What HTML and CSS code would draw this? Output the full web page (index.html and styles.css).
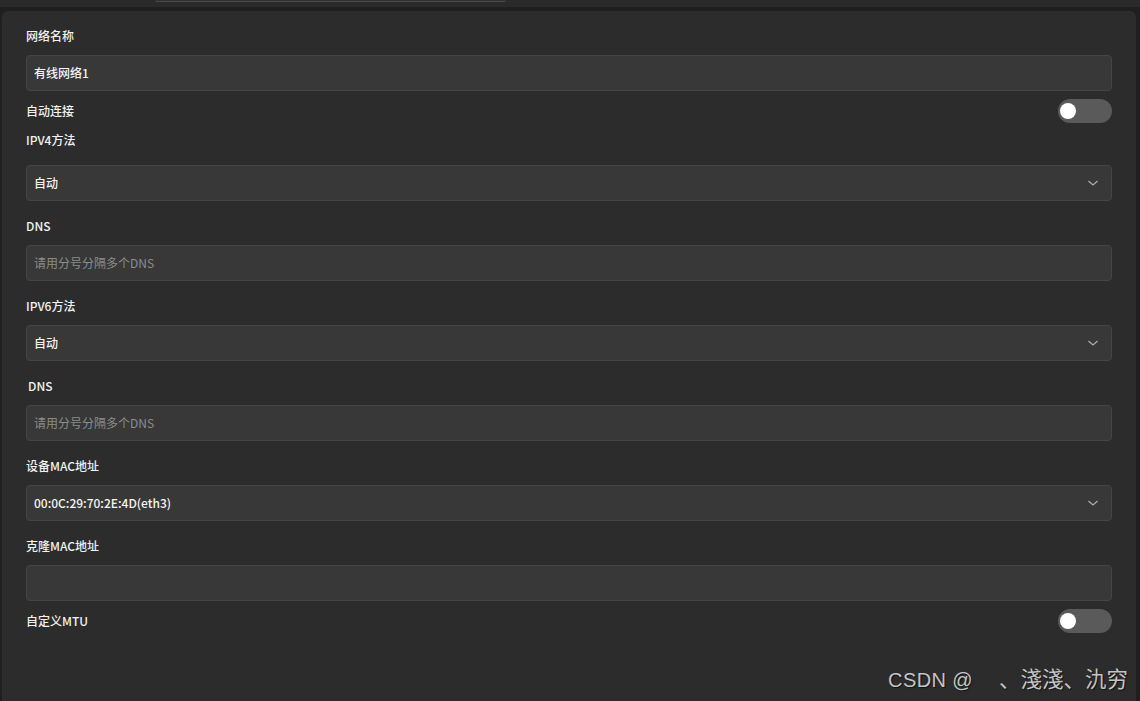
FILE: index.html
```html
<!DOCTYPE html>
<html lang="zh-CN">
<head>
<meta charset="utf-8">
<title>网络设置</title>
<link rel="stylesheet" href="styles.css">
</head>
<body>
<div class="topbar"><div class="tab"></div></div>
<div class="panel">
  <div class="label">网络名称</div>
  <div class="field"><span class="value">有线网络1</span></div>

  <div class="row"><span class="label-inline">自动连接</span><span class="switch"><span class="knob"></span></span></div>

  <div class="label label-ipv4">IPV4方法</div>
  <div class="field select"><span class="value">自动</span>
    <svg class="chev" width="12" height="8" viewBox="0 0 12 8"><polyline points="1.5,2 6,6 10.5,2" fill="none" stroke="#b0b0b0" stroke-width="1.2"/></svg>
  </div>

  <div class="label">DNS</div>
  <div class="field"><span class="placeholder">请用分号分隔多个DNS</span></div>

  <div class="label">IPV6方法</div>
  <div class="field select"><span class="value">自动</span>
    <svg class="chev" width="12" height="8" viewBox="0 0 12 8"><polyline points="1.5,2 6,6 10.5,2" fill="none" stroke="#b0b0b0" stroke-width="1.2"/></svg>
  </div>

  <div class="label label-indent">DNS</div>
  <div class="field"><span class="placeholder">请用分号分隔多个DNS</span></div>

  <div class="label">设备MAC地址</div>
  <div class="field select"><span class="value">00:0C:29:70:2E:4D(eth3)</span>
    <svg class="chev" width="12" height="8" viewBox="0 0 12 8"><polyline points="1.5,2 6,6 10.5,2" fill="none" stroke="#b0b0b0" stroke-width="1.2"/></svg>
  </div>

  <div class="label">克隆MAC地址</div>
  <div class="field"></div>

  <div class="row"><span class="label-inline">自定义MTU</span><span class="switch"><span class="knob"></span></span></div>
</div>
<div class="watermark"><span class="wm-a">CSDN @</span><span class="wm-b">、淺淺、氿穷</span></div>
</body>
</html>
```
FILE: styles.css
```css
html, body {
  margin: 0;
  padding: 0;
  height: 100%;
}
body {
  background: #1f1f1f;
  font-family: "Noto Sans CJK SC", "Noto Sans", sans-serif;
  font-size: 12px;
  color: #eeeeee;
  overflow: hidden;
  display: flex;
  flex-direction: column;
}
.topbar {
  height: 7px;
  background: #2a2a2a;
  flex: none;
  padding-left: 155px;
  margin-bottom: 4px;
}
.tab {
  width: 351px;
  height: 1px;
  border-bottom: 1px solid #4a4a4a;
  border-radius: 0 0 3px 3px;
  background: #303030;
}
.panel {
  flex: 1;
  margin: 0 4px 0 2px;
  background: #2c2c2c;
  border-radius: 6px 6px 0 0;
  padding: 15px 24px 0 24px;
  display: flex;
  flex-direction: column;
}
.label, .label-inline {
  font-weight: 500;
  line-height: 20px;
  color: #f2f2f2;
}
.label {
  margin: 15px 0 9px 0;
}
.panel > .label:first-child {
  margin-top: 0;
}
.label-ipv4 {
  margin-top: 7px;
  margin-bottom: 15px;
}
.label-indent {
  padding-left: 2px;
}
.field {
  height: 36px;
  box-sizing: border-box;
  background: #383838;
  border: 1px solid #454545;
  border-radius: 4px;
  display: flex;
  align-items: center;
  padding: 0 12px 2px 7px;
}
.select {
  justify-content: space-between;
}
.value {
  color: #f4f4f4;
  font-weight: 500;
}
.placeholder {
  color: #8c8c8c;
}
.chev {
  display: block;
  margin-top: 2px;
}
.row {
  margin-top: 8px;
  height: 24px;
  display: flex;
  align-items: center;
  justify-content: space-between;
}
.switch {
  width: 54px;
  height: 24px;
  border-radius: 12px;
  background: #5a5a5a;
  display: flex;
  align-items: center;
  padding-left: 2px;
  box-sizing: border-box;
}
.knob {
  width: 16px;
  height: 16px;
  border-radius: 50%;
  background: #ffffff;
}
.watermark {
  position: absolute;
  right: 12px;
  bottom: 8px;
  font-family: "Liberation Sans", "Noto Sans CJK SC", sans-serif;
  font-size: 20px;
  color: #c4c4c4;
  text-shadow: 1px 1px 1px rgba(0,0,0,0.6);
  white-space: nowrap;
  display: flex;
  align-items: baseline;
}
.wm-a {
  margin-right: 26px;
  letter-spacing: 0.4px;
}
.wm-b {
  font-size: 21.5px;
}
```
